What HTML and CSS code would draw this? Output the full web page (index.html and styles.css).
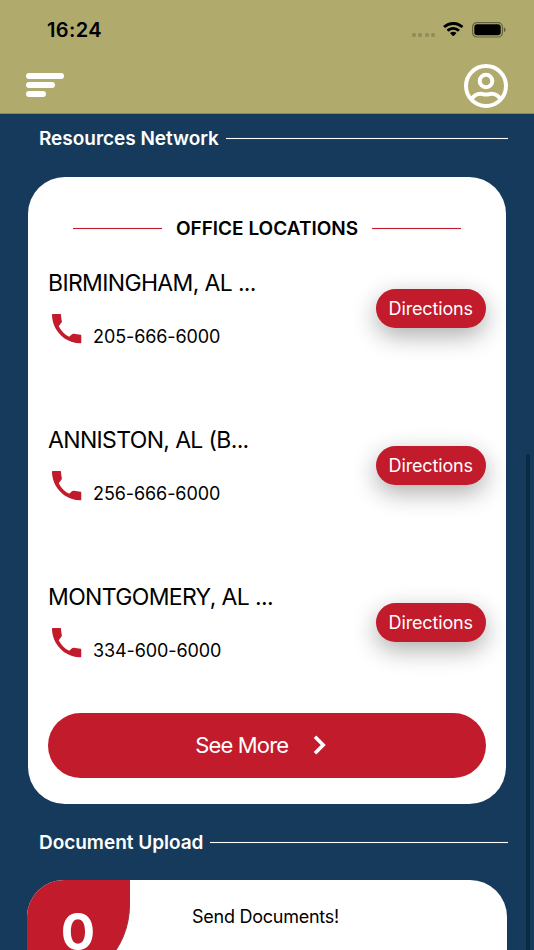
FILE: index.html
```html
<!DOCTYPE html>
<html lang="en">
<head>
<meta charset="utf-8">
<title>Resources Network</title>
<link rel="stylesheet" href="styles.css">
</head>
<body>
<svg class="defs" width="0" height="0" aria-hidden="true">
  <symbol id="phone" viewBox="3 3 18 18"><path d="M7.100 10.400c1.400 2.700 3.700 5.100 6.400 6.500l1.700-1.500c.3-.3.700-.4 1.100-.3 1.200.3 2.600.5 4.200.6.300 0 .5.200.5.500v4.300c0 .3-.2.500-.5.500C10.900 21 3 12.800 3 3.500c0-.3.200-.5.500-.5h4.500c.3 0 .5.300.5.600.1 1.300.200 2.500.5 3.700.1.400 0 .8-.3 1.100z"/></symbol>
</svg>
<header class="header">
  <div class="status">
    <span class="time">16:24</span>
    <div class="indicators">
      <div class="dots"><i></i><i></i><i></i><i></i></div>
      <svg class="wifi" viewBox="0 0 20 15"><path d="M10 0C6.200 0 2.700 1.400.2 3.800a.5.5 0 0 0 0 .7l1.300 1.300c.2.200.5.200.7 0A11.300 11.300 0 0 1 10 2.900c3 0 5.700 1 7.800 2.900.2.200.5.200.7 0l1.300-1.300a.5.5 0 0 0 0-.7A14.100 14.100 0 0 0 10 0z"/><path d="M10 4.900c-2.500 0-4.700.9-6.400 2.500-.2.200-.2.500 0 .7L5 9.400c.2.200.5.200.7 0a6.500 6.500 0 0 1 8.600 0c.2.200.5.200.7 0l1.400-1.300c.2-.2.200-.5 0-.7A9.200 9.200 0 0 0 10 4.900z"/><path d="M10 9.700c-1.100 0-2.100.4-2.900 1-.2.200-.2.500 0 .7l2.500 2.500c.2.200.6.200.8 0l2.500-2.500c.2-.2.200-.5 0-.7-.8-.6-1.800-1-2.900-1z"/></svg>
      <svg class="battery" viewBox="0 0 34 16"><rect x=".6" y=".6" width="29.800" height="14.400" rx="4.300" fill="none" stroke="#000" stroke-opacity=".42" stroke-width="1.200"/><rect x="2.300" y="2.300" width="26.400" height="11" rx="2.800"/><path d="M31.900 5.300v5c1-.4 1.700-1.400 1.700-2.500s-.7-2.100-1.700-2.500z" fill-opacity=".45"/></svg>
    </div>
  </div>
  <nav class="nav">
    <div class="menu"><i></i><i></i><i></i></div>
    <svg class="profile" viewBox="0 0 44 44" fill="none" stroke="#fff" stroke-width="4"><circle cx="22" cy="22" r="20"/><circle cx="22" cy="17" r="6.300"/><path d="M7.500 35C10 31.500 13.500 29.800 16.500 29.800c2.200 0 3.200.8 5.500.8s3.300-.8 5.500-.8c3 0 6.500 1.700 9 5.200"/></svg>
  </nav>
</header>
<main>
  <h2 class="section">Resources Network</h2>
  <section class="card">
    <h3 class="card-title">OFFICE LOCATIONS</h3>
    <article class="office">
      <div class="info"><div class="name">BIRMINGHAM, AL ...</div><div class="call"><svg><use href="#phone"/></svg><span>205-666-6000</span></div></div>
      <button class="directions">Directions</button>
    </article>
    <article class="office">
      <div class="info"><div class="name">ANNISTON, AL (B...</div><div class="call"><svg><use href="#phone"/></svg><span>256-666-6000</span></div></div>
      <button class="directions">Directions</button>
    </article>
    <article class="office">
      <div class="info"><div class="name">MONTGOMERY, AL ...</div><div class="call"><svg><use href="#phone"/></svg><span>334-600-6000</span></div></div>
      <button class="directions">Directions</button>
    </article>
    <button class="more"><span>See More</span><svg viewBox="0 0 13 20"><path d="M2 1.800 10.200 10 2 18.200" fill="none" stroke="#fff" stroke-width="3.600"/></svg></button>
  </section>
  <h2 class="section upload-title">Document Upload</h2>
  <section class="upload">
    <div class="count">0</div>
    <div class="send">Send Documents!</div>
  </section>
</main>
<div class="scrollbar"></div>
</body>
</html>
```

FILE: styles.css
```css
* { box-sizing: border-box; }
body {
  margin: 0;
  height: 950px;
  overflow: hidden;
  position: relative;
  background: #153a5b;
  color: #000;
  font-family: Inter, "Liberation Sans", sans-serif;
}
button { border: 0; padding: 0; font: inherit; color: #fff; background: #c11b2c; }
svg { display: block; flex: none; }
.defs { position: absolute; }

.header { height: 114px; background: #b0aa6d; border-bottom: 1px solid #85895f; }
.status { height: 60px; padding: 0 28px 0 47px; display: flex; justify-content: space-between; align-items: center; }
.time { font-size: 20px; font-weight: 560; letter-spacing: .35px; }
.indicators { display: flex; align-items: center; }
.dots { display: flex; gap: 2.500px; margin: 10px 8px 0 0; }
.dots i { width: 4px; height: 4px; border-radius: 1.500px; background: #918c5a; }
.wifi { width: 20.500px; height: 15px; margin: -1px 8.500px 0 0; }
.battery { width: 34px; height: 16px; margin-top: -1px; }
.nav { display: flex; justify-content: space-between; padding: 4px 26px 0; }
.menu { padding-top: 9px; display: flex; flex-direction: column; gap: 3.500px; }
.menu i { height: 5.700px; border-radius: 3px; background: #fff; width: 38px; }
.menu i:nth-child(2) { width: 29px; }
.menu i:nth-child(3) { width: 20px; }
.profile { width: 44px; height: 44px; }

.section {
  margin: 0 26px 0 39px;
  height: 48px;
  display: flex;
  align-items: center;
  gap: 7px;
  color: #fff;
  font-size: 19px;
  font-weight: 560;
  letter-spacing: -.03px;
  white-space: nowrap;
}
.section::after { content: ""; flex: 1; height: 1px; background: #fff; box-shadow: 0 0 1px rgba(255, 255, 255, .5); }

.card { margin: 15px 28px 0; height: 626.500px; padding: 0 20px; border-radius: 37px; background: #fff; }
.card-title {
  margin: 0;
  padding: 0 25px;
  height: 103px;
  display: flex;
  align-items: center;
  gap: 14px;
  font-size: 19px;
  font-weight: 560;
  white-space: nowrap;
}
.card-title::before, .card-title::after { content: ""; flex: 1; height: 1px; background: #c11b2c; box-shadow: 0 0 1px rgba(193, 27, 44, .5); }
.office { height: 157px; display: flex; justify-content: space-between; align-items: flex-start; }
.office:nth-of-type(1) { margin-top: -12px; }
.name { font-size: 23px; line-height: 28px; height: 47px; letter-spacing: -.65px; white-space: pre; }
.call { display: flex; align-items: flex-start; }
.call svg { width: 29.500px; height: 29.500px; margin: -2px 11.500px 0 4px; fill: #c11b2c; }
.call span { font-size: 18px; line-height: 22px; padding-top: 10px; letter-spacing: -.1px; }
.info { padding-top: 1px; }
.directions {
  width: 110.500px;
  height: 38.500px;
  margin-top: 21px;
  border-radius: 20px;
  font-size: 18px;
  letter-spacing: -.15px;
  box-shadow: 0 8px 24px rgba(0, 0, 0, .32);
}
.more {
  width: 100%;
  height: 64.500px;
  margin-top: -26px;
  padding-right: 13px;
  border-radius: 33px;
  display: flex;
  align-items: center;
  justify-content: center;
  gap: 24.500px;
  font-size: 22px;
  letter-spacing: -.85px;
}
.more svg { width: 13px; height: 20px; }
.upload-title { margin-top: 14.500px; }
.upload { margin: 14px 27px 0; height: 110px; display: flex; background: #fff; border-radius: 37px 37px 0 0; overflow: hidden; }
.count {
  width: 103px;
  height: 107px;
  flex: none;
  border: 1px solid #8f3440;
  border-width: 0 1px 0 0;
  border-radius: 0 0 82px 0;
  background: #c11b2c;
  color: #fff;
  font-size: 51px;
  font-weight: 700;
  line-height: 103px;
  text-align: center;
}
.send { flex: 1; padding: 26px 0 0 62px; font-size: 18px; line-height: 22px; letter-spacing: -.25px; }
.scrollbar { position: absolute; right: 4px; top: 454px; bottom: -20px; width: 4px; border-radius: 2px; background: #0c2a42; }
```
